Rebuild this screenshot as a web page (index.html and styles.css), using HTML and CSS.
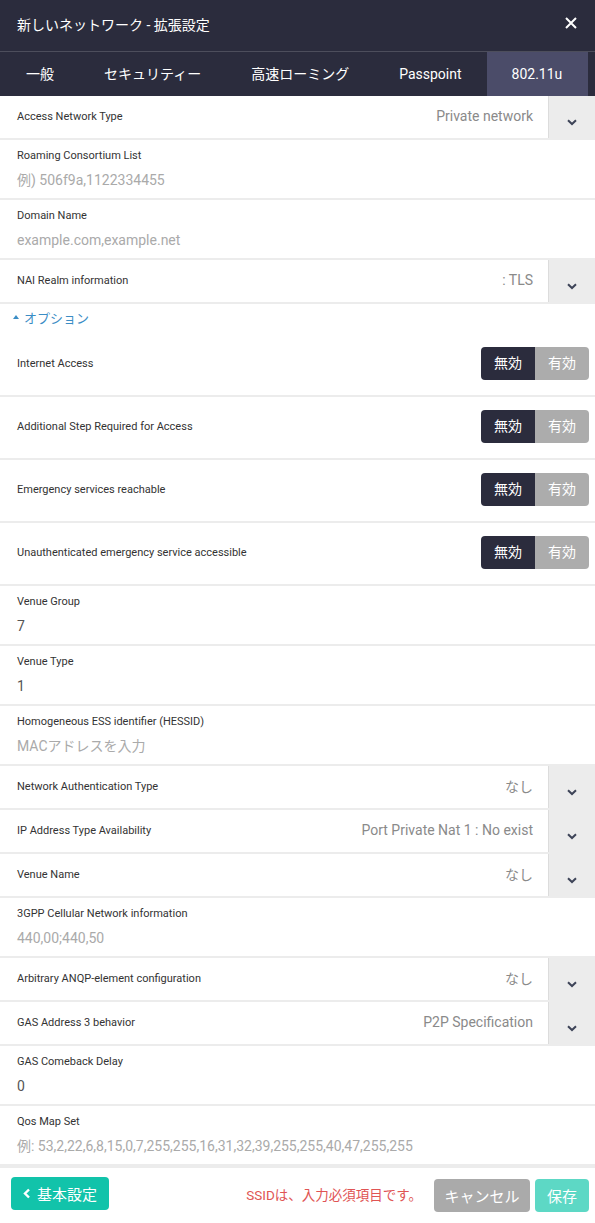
FILE: index.html
```html
<!DOCTYPE html>
<html lang="ja">
<head>
<meta charset="utf-8">
<title>新しいネットワーク - 拡張設定</title>
<link rel="stylesheet" href="styles.css">
</head>
<body>
<div class="modal">
  <header class="header">
    <div class="title">新しいネットワーク - 拡張設定</div>
    <svg class="close" width="12" height="12" viewBox="0 0 12 12"><path d="M1 1L11 11M11 1L1 11" stroke="#fff" stroke-width="2"/></svg>
  </header>
  <nav class="tabs">
    <div class="tab">一般</div>
    <div class="tab">セキュリティー</div>
    <div class="tab">高速ローミング</div>
    <div class="tab">Passpoint</div>
    <div class="tab active">802.11u</div>
  </nav>

  <main class="content">
    <div class="row select-row">
      <div class="label">Access Network Type</div>
      <div class="sel-value">Private network</div>
      <div class="sel-btn"><svg width="10" height="7" viewBox="0 0 10 7"><path d="M1 1.2L5 5L9 1.2" fill="none" stroke="#3e4458" stroke-width="2"/></svg></div>
    </div>
    <div class="row input-row">
      <div class="label">Roaming Consortium List</div>
      <div class="value placeholder">例) 506f9a,1122334455</div>
    </div>
    <div class="row input-row">
      <div class="label">Domain Name</div>
      <div class="value placeholder">example.com,example.net</div>
    </div>
    <div class="row select-row">
      <div class="label">NAI Realm information</div>
      <div class="sel-value">: TLS</div>
      <div class="sel-btn"><svg width="10" height="7" viewBox="0 0 10 7"><path d="M1 1.2L5 5L9 1.2" fill="none" stroke="#3e4458" stroke-width="2"/></svg></div>
    </div>
    <div class="options"><span class="tri"></span>オプション</div>
    <div class="row toggle-row">
      <div class="label">Internet Access</div>
      <div class="toggle"><span class="off">無効</span><span class="on">有効</span></div>
    </div>
    <div class="row toggle-row">
      <div class="label">Additional Step Required for Access</div>
      <div class="toggle"><span class="off">無効</span><span class="on">有効</span></div>
    </div>
    <div class="row toggle-row">
      <div class="label">Emergency services reachable</div>
      <div class="toggle"><span class="off">無効</span><span class="on">有効</span></div>
    </div>
    <div class="row toggle-row">
      <div class="label">Unauthenticated emergency service accessible</div>
      <div class="toggle"><span class="off">無効</span><span class="on">有効</span></div>
    </div>
    <div class="row input-row">
      <div class="label">Venue Group</div>
      <div class="value">7</div>
    </div>
    <div class="row input-row">
      <div class="label">Venue Type</div>
      <div class="value">1</div>
    </div>
    <div class="row input-row">
      <div class="label">Homogeneous ESS identifier (HESSID)</div>
      <div class="value placeholder">MACアドレスを入力</div>
    </div>
    <div class="row select-row">
      <div class="label">Network Authentication Type</div>
      <div class="sel-value">なし</div>
      <div class="sel-btn"><svg width="10" height="7" viewBox="0 0 10 7"><path d="M1 1.2L5 5L9 1.2" fill="none" stroke="#3e4458" stroke-width="2"/></svg></div>
    </div>
    <div class="row select-row">
      <div class="label">IP Address Type Availability</div>
      <div class="sel-value">Port Private Nat 1 : No exist</div>
      <div class="sel-btn"><svg width="10" height="7" viewBox="0 0 10 7"><path d="M1 1.2L5 5L9 1.2" fill="none" stroke="#3e4458" stroke-width="2"/></svg></div>
    </div>
    <div class="row select-row">
      <div class="label">Venue Name</div>
      <div class="sel-value">なし</div>
      <div class="sel-btn"><svg width="10" height="7" viewBox="0 0 10 7"><path d="M1 1.2L5 5L9 1.2" fill="none" stroke="#3e4458" stroke-width="2"/></svg></div>
    </div>
    <div class="row input-row">
      <div class="label">3GPP Cellular Network information</div>
      <div class="value placeholder">440,00;440,50</div>
    </div>
    <div class="row select-row">
      <div class="label">Arbitrary ANQP-element configuration</div>
      <div class="sel-value">なし</div>
      <div class="sel-btn"><svg width="10" height="7" viewBox="0 0 10 7"><path d="M1 1.2L5 5L9 1.2" fill="none" stroke="#3e4458" stroke-width="2"/></svg></div>
    </div>
    <div class="row select-row">
      <div class="label">GAS Address 3 behavior</div>
      <div class="sel-value">P2P Specification</div>
      <div class="sel-btn"><svg width="10" height="7" viewBox="0 0 10 7"><path d="M1 1.2L5 5L9 1.2" fill="none" stroke="#3e4458" stroke-width="2"/></svg></div>
    </div>
    <div class="row input-row">
      <div class="label">GAS Comeback Delay</div>
      <div class="value">0</div>
    </div>
    <div class="row input-row">
      <div class="label">Qos Map Set</div>
      <div class="value placeholder">例: 53,2,22,6,8,15,0,7,255,255,16,31,32,39,255,255,40,47,255,255</div>
    </div>
  </main>

  <footer class="footer">
    <button class="btn back"><svg width="8" height="11" viewBox="0 0 8 11"><path d="M6 1.5L2 5.5L6 9.5" fill="none" stroke="#fff" stroke-width="2.4"/></svg>基本設定</button>
    <div class="error">SSIDは、入力必須項目です。</div>
    <button class="btn cancel">キャンセル</button>
    <button class="btn save">保存</button>
  </footer>
</div>
</body>
</html>
```

FILE: styles.css
```css
* { box-sizing: border-box; }
html, body { margin: 0; padding: 0; background: #fff; }
body {
  font-family: Roboto, "Noto Sans CJK JP", sans-serif;
  width: 595px;
}
.modal { width: 595px; }

.header {
  height: 51px;
  background: #2b2c3d;
  display: flex;
  align-items: center;
  justify-content: space-between;
  padding: 0 18px 4px 17px;
}
.title { color: #fff; font-size: 14px; }
.close { display: block; margin-top: -1px; }

.tabs {
  height: 45px;
  background: #2b2c3d;
  border-top: 1px solid #4d4e5c;
  display: flex;
  padding-left: 1px;
}
.tab {
  color: #fff;
  font-size: 14px;
  line-height: 44px;
  padding: 0 25px;
}
.tab.active { background: #4b4c69; padding: 0 26px 0 25px; }

.row {
  display: flex;
  border-bottom: 2px solid #ececec;
  padding-left: 17px;
}
.label { font-size: 11px; color: #333; }

.select-row { height: 44px; align-items: center; }
.select-row .label { flex: 1; margin-top: -2px; }
.sel-value { font-size: 14px; color: #8a8a8a; padding-right: 15px; margin-top: -3px; }
.sel-btn {
  width: 47px;
  align-self: stretch;
  background: #ececec;
  border-left: 1px solid #dcdcdc;
  display: flex;
  align-items: center;
  justify-content: center;
  padding-top: 10px;
}
.sel-btn svg { display: block; }

.input-row {
  height: 60px;
  flex-direction: column;
  padding-top: 9px;
}
.input-row .label { line-height: 13px; }
.value { font-size: 14px; color: #555; margin-top: 9px; line-height: 18px; white-space: nowrap; }
.value.placeholder { color: #aaa; }

.options {
  height: 30px;
  display: flex;
  align-items: center;
  padding-left: 13px;
  padding-bottom: 3px;
  font-size: 13px;
  color: #3b8dc5;
}
.tri {
  width: 0; height: 0;
  border-left: 3.5px solid transparent;
  border-right: 3.5px solid transparent;
  border-bottom: 4px solid #3b8dc5;
  margin-right: 5px;
  margin-top: -1px;
}

.toggle-row {
  height: 63px;
  align-items: center;
  justify-content: space-between;
  padding-right: 6px;
  padding-bottom: 2px;
}
.toggle { display: flex; border-radius: 4px; overflow: hidden; }
.toggle span {
  width: 54px;
  height: 33px;
  line-height: 33px;
  text-align: center;
  font-size: 14px;
  color: #fff;
}
.toggle .off { background: #2b2c3d; }
.toggle .on { background: #acacac; }

.footer {
  height: 57px;
  border-top: 2px solid #ececec;
  display: flex;
  align-items: flex-start;
  padding: 9px 6px 0 11px;
}
.btn {
  border: none;
  border-radius: 4px;
  height: 33px;
  color: #fff;
  font-family: Roboto, "Noto Sans CJK JP", sans-serif;
  font-size: 15px;
  padding: 0;
  display: flex;
  align-items: center;
  justify-content: center;
}
.back { width: 98px; background: #12c3aa; gap: 6px; }
.error {
  flex: 1;
  text-align: right;
  color: #e05454;
  font-size: 13.5px;
  line-height: 33px;
  margin-top: 2px;
  padding-right: 12px;
}
.cancel { width: 96px; background: #aaaaaa; margin-top: 2px; }
.save { width: 54px; background: #5dd8c5; margin-left: 5px; margin-top: 2px; }
```
